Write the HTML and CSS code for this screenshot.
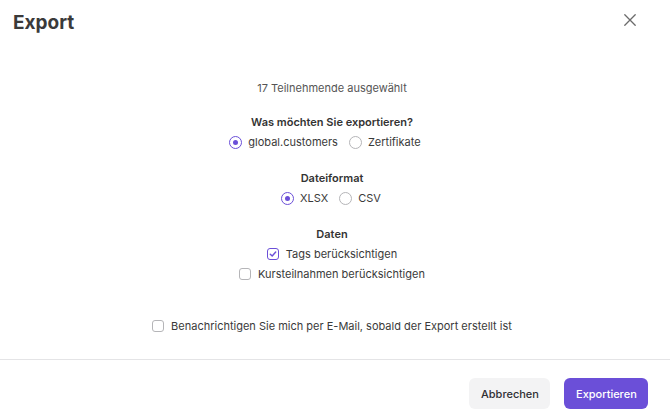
FILE: index.html
```html
<!DOCTYPE html>
<html lang="de">
<head>
<meta charset="utf-8">
<title>Export</title>
<link rel="stylesheet" href="styles.css">
</head>
<body>
<div class="modal">
  <header class="modal-header">
    <h1 class="modal-title">Export</h1>
    <button class="close-btn" aria-label="Schließen">
      <svg width="12" height="12" viewBox="0 0 12 12"><path d="M0.8 0.8 L11.2 11.2 M11.2 0.8 L0.8 11.2" stroke="#6b6b6b" stroke-width="1.3" stroke-linecap="round" fill="none"/></svg>
    </button>
  </header>
  <main class="modal-body">
    <p class="summary">17 Teilnehmende ausgewählt</p>
    <section class="group">
      <div class="group-label">Was möchten Sie exportieren?</div>
      <div class="options options-wide">
        <label class="option"><span class="radio checked"></span>global.customers</label>
        <label class="option"><span class="radio"></span>Zertifikate</label>
      </div>
    </section>
    <section class="group">
      <div class="group-label">Dateiformat</div>
      <div class="options">
        <label class="option"><span class="radio checked"></span>XLSX</label>
        <label class="option"><span class="radio"></span>CSV</label>
      </div>
    </section>
    <section class="group">
      <div class="group-label">Daten</div>
      <label class="option"><span class="checkbox checked"><svg width="8" height="8" viewBox="0 0 8 8"><path d="M1.3 4.2 L3.2 6 L6.7 2" stroke="#6b4fd8" stroke-width="1.4" fill="none" stroke-linecap="round" stroke-linejoin="round"/></svg></span>Tags berücksichtigen</label>
      <label class="option"><span class="checkbox"></span>Kursteilnahmen berücksichtigen</label>
    </section>
    <label class="option notify"><span class="checkbox"></span>Benachrichtigen Sie mich per E-Mail, sobald der Export erstellt ist</label>
  </main>
  <footer class="modal-footer">
    <button class="btn btn-secondary">Abbrechen</button>
    <button class="btn btn-primary">Exportieren</button>
  </footer>
</div>
</body>
</html>
```

FILE: styles.css
```css
* { box-sizing: border-box; }
html, body {
  margin: 0;
  padding: 0;
  background: #ffffff;
}
body {
  font-family: Inter, "Noto Sans", sans-serif;
  color: #333333;
}
.modal {
  width: 670px;
  height: 420px;
  display: flex;
  flex-direction: column;
  background: #ffffff;
}
.modal-header {
  height: 42px;
  padding: 11px 13px 0 13px;
  display: flex;
  justify-content: space-between;
  align-items: flex-start;
}
.modal-title {
  margin: 0;
  font-size: 19px;
  line-height: 24px;
  font-weight: 700;
  color: #3a3a3a;
}
.close-btn {
  border: 0;
  background: transparent;
  padding: 0;
  margin: 3px 21px 0 0;
  width: 12px;
  height: 12px;
  display: flex;
}
.modal-body {
  flex: 1;
  padding: 36px 6px 0 0;
  display: flex;
  flex-direction: column;
  align-items: center;
  gap: 16px;
  font-size: 11px;
  line-height: 20px;
}
.summary {
  margin: 0 0 -2px 0;
  color: #555555;
}
.group {
  display: flex;
  flex-direction: column;
  align-items: center;
}
.group-label {
  font-weight: 600;
  color: #333333;
}
.options {
  display: flex;
  gap: 11px;
  padding-right: 2px;
}
.options-wide {
  padding-right: 14px;
}
.option {
  display: flex;
  align-items: center;
  gap: 6px;
  color: #3a3a3a;
}
.radio {
  width: 13px;
  height: 13px;
  border-radius: 50%;
  border: 1px solid #b5b5b8;
  display: flex;
  align-items: center;
  justify-content: center;
}
.radio.checked {
  border: 1.3px solid #6b4fd8;
}
.radio.checked::after {
  content: "";
  width: 5px;
  height: 5px;
  border-radius: 50%;
  background: #6b4fd8;
}
.checkbox {
  width: 12px;
  height: 12px;
  border-radius: 3px;
  border: 1px solid #b5b5b8;
  display: flex;
  align-items: center;
  justify-content: center;
  margin-right: 1px;
}
.checkbox.checked {
  border: 1.3px solid #6b4fd8;
}
.notify {
  margin-top: 16px;
}
.modal-footer {
  height: 61px;
  border-top: 1px solid #e4e4e6;
  padding: 18px 22px 0 0;
  display: flex;
  justify-content: flex-end;
  align-items: flex-start;
  gap: 14px;
}
.btn {
  height: 31px;
  border: 0;
  border-radius: 6px;
  font-family: Inter, "Noto Sans", sans-serif;
  font-size: 11px;
  font-weight: 500;
  padding: 0 12px;
}
.btn-secondary {
  width: 81px;
  background: #f3f3f4;
  color: #2f2f33;
}
.btn-primary {
  width: 84px;
  background: #6b4fd8;
  color: #ffffff;
}
```
